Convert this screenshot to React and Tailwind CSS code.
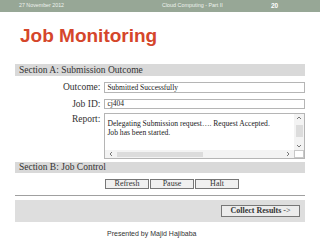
export default function App() {
  const serif = { fontFamily: '"Liberation Serif", "Times New Roman", serif' };
  const sans = { fontFamily: '"Liberation Sans", Arial, sans-serif' };
  return (
    <div className="w-[320px] h-[240px] bg-white overflow-hidden flex flex-col" style={sans}>
      {/* header */}
      <div className="h-[12px] bg-[#97a796] flex items-center text-[5.3px] text-[#eef2ee] leading-none shrink-0">
        <span className="w-[162px] pl-[19px]">27 November 2012</span>
        <span className="w-[109px] text-[5.4px]">Cloud Computing - Part II</span>
        <span className="font-bold text-[6.5px] text-white">20</span>
      </div>
      {/* title */}
      <div className="h-[52px] shrink-0 pt-[14px] pl-[20px]">
        <div className="text-[19px] leading-[19px] font-bold text-[#d5462b]">Job Monitoring</div>
      </div>
      <div className="px-[15px] flex flex-col" style={serif}>
        {/* Section A */}
        <div className="h-[12px] bg-[#d9d9d9] pl-[4px] text-[9.5px] leading-[12px] text-[#333]">
          Section A: Submission Outcome
        </div>
        <div className="flex items-center mt-[6px] h-[11px]">
          <div className="w-[86px] text-right text-[9.5px] leading-[11px] text-[#333]">Outcome:</div>
          <div className="ml-[4px] w-[202px] h-[11px] border border-[#b5b5b5] text-[7.5px] leading-[9px] pl-[2px] text-[#222]">
            Submitted Successfully
          </div>
        </div>
        <div className="flex items-center mt-[6px] h-[10px]">
          <div className="w-[86px] text-right text-[9.5px] leading-[10px] text-[#333]">Job ID:</div>
          <div className="ml-[4px] w-[202px] h-[10px] border border-[#b5b5b5] text-[7.5px] leading-[8px] pl-[2px] text-[#222]">
            cj404
          </div>
        </div>
        <div className="flex mt-[4px]">
          <div className="w-[86px] text-right text-[9.5px] leading-[10px] pt-[1px] text-[#333]">Report:</div>
          <div className="ml-[4px] w-[202px] h-[46px] border border-[#b5b5b5] flex flex-col">
            <div className="flex flex-1">
              <div className="flex-1 pl-[2px] pt-[5px] text-[7.6px] leading-[9px] text-[#222]">
                <div>Delegating Submission request…. Request Accepted.</div>
                <div>Job has been started.</div>
              </div>
              <div className="w-[10px] flex flex-col items-center bg-[#f3f3f3]">
                <svg width="6" height="6" viewBox="0 0 6 6" className="mt-[1px]">
                  <path d="M1 4 L3 2 L5 4" fill="none" stroke="#777" strokeWidth="1" />
                </svg>
                <div className="w-[7px] h-[12px] bg-[#dcdcdc] mt-[4px]" />
                <div className="flex-1" />
                <svg width="6" height="6" viewBox="0 0 6 6" className="mb-[1px]">
                  <path d="M1 2 L3 4 L5 2" fill="none" stroke="#777" strokeWidth="1" />
                </svg>
              </div>
            </div>
            <div className="flex h-[8px]">
              <div className="flex-1 flex items-center bg-[#f3f3f3]">
                <svg width="6" height="6" viewBox="0 0 6 6" className="ml-[3px]">
                  <path d="M4 1 L2 3 L4 5" fill="none" stroke="#777" strokeWidth="1" />
                </svg>
                <div className="ml-[3px] w-[86px] h-[5px] bg-[#dcdcdc]" />
                <div className="flex-1" />
                <svg width="6" height="6" viewBox="0 0 6 6" className="mr-[3px]">
                  <path d="M2 1 L4 3 L2 5" fill="none" stroke="#777" strokeWidth="1" />
                </svg>
              </div>
              <div className="w-[10px] border border-[#c8c8c8] bg-white" />
            </div>
          </div>
        </div>
        {/* Section B */}
        <div className="h-[11px] mt-[3px] bg-[#d9d9d9] pl-[4px] text-[9.5px] leading-[11px] text-[#333]">
          Section B: Job Control
        </div>
        <div className="flex mt-[6px] pl-[90px] gap-[1px]">
          {['Refresh', 'Pause', 'Halt'].map((t) => (
            <div
              key={t}
              className="w-[44px] h-[10px] border border-[#777] bg-[#f0f0f0] text-center text-[8px] leading-[8px] text-[#333]"
            >
              {t}
            </div>
          ))}
        </div>
        <div className="mt-[6px] h-px bg-[#a0a0a0]" />
        <div className="mt-[4px] h-[22px] bg-[#dedede] flex items-center justify-end pr-[5px]">
          <div className="w-[79px] h-[12px] border border-[#777] bg-[#ececec] text-center text-[8px] leading-[10px] text-[#333]">
            <span className="font-bold">Collect Results</span> -&gt;
          </div>
        </div>
      </div>
      <div className="mt-[8px] pl-[107px] text-[7px] leading-[8px] text-[#333]" style={sans}>
        Presented by Majid Hajibaba
      </div>
    </div>
  );
}
